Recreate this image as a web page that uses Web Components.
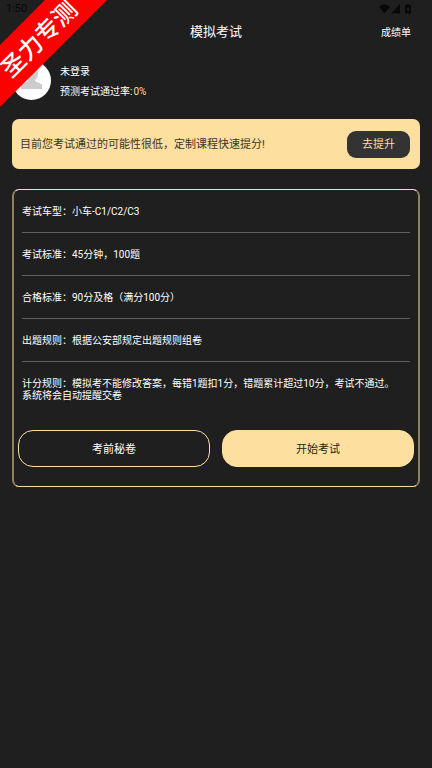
<!DOCTYPE html>
<html lang="zh-CN">
<head>
<meta charset="utf-8">
<meta name="viewport" content="width=device-width, initial-scale=1">
<title>模拟考试</title>
<style>
html{background:#1f1f1f}
body{margin:0;min-height:100vh;background:#1f1f1f;color:#fff;font:10px/12px Roboto,"Noto Sans CJK SC",sans-serif}
</style>
</head>
<body>
<exam-page></exam-page>
<script>
function define(name, html){
  customElements.define(name, class extends HTMLElement{
    constructor(){
      super();
      const t=document.createElement('template');
      t.innerHTML=html;
      this.attachShadow({mode:'open'}).append(t.content.cloneNode(true));
    }
  });
}

define('status-bar', `
<style>
:host{display:flex;justify-content:space-between;align-items:center;height:18px;padding:0 19px 0 6px;color:#080808;font-size:11px;line-height:18px}
svg{display:block}
</style>
<span>1:50</span>
<svg width="34" height="10" viewBox="0 0 34 10" fill="#080808" aria-hidden="true">
<path d="M0 2.8Q5.5-1.6 11 2.8L5.5 9.5Z"/>
<path d="M21 0V9.5H12Z"/>
<path fill-rule="evenodd" d="M28 0h2v1h2v8.5h-6V1h2ZM29.6 2.5 27.4 5.7H28.7V8L30.8 4.8H29.6Z"/>
</svg>`);

define('page-header', `
<style>
:host{display:grid;grid-template-columns:1fr auto 1fr;align-items:center;height:28px;padding:0 21px}
h1{grid-column:2;margin:0;font-size:13px;line-height:18px;font-weight:400}
a{justify-self:end;color:inherit;text-decoration:none;line-height:16px;padding-top:2px}
</style>
<h1><slot></slot></h1><a href="#report"><slot name="action"></slot></a>`);

define('user-summary', `
<style>
:host{display:flex;align-items:center;gap:9px;padding:14px 12px 0}
svg{display:block;flex:none}
div{display:grid;gap:4px;padding-top:4px}
p{margin:0;line-height:16px}
b{font-weight:400;color:#fddf9f;margin-left:1px}
</style>
<svg width="39" height="39" viewBox="0 0 39 39" aria-hidden="true"><circle cx="19.500" cy="19.500" r="19.500" fill="#fff"/><path fill="#ccc" d="M13 12c0-4 3-6 6.500-6S26 8 26 12c0 3-1 5-3 7v1c1 1 6 2 7 4v4H9v-4c1-2 6-3 7-4v-1c-2-2-3-4-3-7Z"/></svg>
<div><p><slot name="name"></slot></p><p><slot></slot><b><slot name="rate"></slot></b></p></div>`);

define('promo-banner', `
<style>
:host{display:flex;justify-content:space-between;align-items:center;margin:19px 12px 0;height:50px;padding:0 10px 0 8px;border-radius:7px;background:#fddf9f;color:#3a352a;font-size:11px}
span{padding-top:2px}
button{flex:none;width:63px;height:27px;border:0;border-radius:9px;padding:2px 0 0;background:#333;color:#fddf9f;font:inherit;line-height:16px}
</style>
<span><slot></slot></span><button type="button"><slot name="action"></slot></button>`);

define('info-row', `
<style>
:host{display:block;box-sizing:border-box;margin:0 8px;padding:16px 0 14px;border-bottom:1px solid #606060;line-height:12px}
:host([last]){border-bottom:0;padding-right:10px;padding-bottom:0}
</style>
<slot></slot>`);

define('pill-button', `
<style>
:host{display:block;flex:1}
button{display:block;width:100%;height:37px;box-sizing:border-box;padding:2px 0 0;border:1px solid #fddf9f;border-radius:15px;background:transparent;color:#fff;font:inherit;font-size:11px;line-height:16px}
:host([primary]) button{background:#fddf9f;color:#1f1f1f}
</style>
<button type="button"><slot></slot></button>`);

define('exam-card', `
<style>
:host{display:block;margin:20px 12px 0;padding-bottom:19px;border:1px solid #fddf9f;border-inline:2px solid #917f5d;border-radius:7px}
.actions{display:flex;gap:12px;margin:28px 4px 0}
</style>
<slot></slot><div class="actions"><slot name="actions"></slot></div>`);

define('corner-ribbon', `
<style>
:host{position:absolute;top:0;left:0;width:108px;height:108px;overflow:hidden;pointer-events:none}
span{position:absolute;top:38px;left:38px;box-sizing:border-box;width:180px;height:44px;padding:4px 0 0;transform:translate(-50%,-50%) rotate(-45deg);background:#f00;color:#fff;text-align:center;font-size:24px;line-height:40px;font-weight:500}
</style>
<span><slot></slot></span>`);

define('exam-page', `
<style>
:host{display:block;position:relative;min-height:100vh}
</style>
<status-bar></status-bar>
<page-header>模拟考试<span slot="action">成绩单</span></page-header>
<main>
<user-summary><span slot="name">未登录</span>预测考试通过率:<span slot="rate">0%</span></user-summary>
<promo-banner>目前您考试通过的可能性很低，定制课程快速提分!<span slot="action">去提升</span></promo-banner>
<exam-card>
<info-row>考试车型：小车-C1/C2/C3</info-row>
<info-row>考试标准：45分钟，100题</info-row>
<info-row>合格标准：90分及格（满分100分）</info-row>
<info-row>出题规则：根据公安部规定出题规则组卷</info-row>
<info-row last>计分规则：模拟考不能修改答案，每错1题扣1分，错题累计超过10分，考试不通过。系统将会自动提醒交卷</info-row>
<pill-button slot="actions">考前秘卷</pill-button>
<pill-button slot="actions" primary>开始考试</pill-button>
</exam-card>
</main>
<corner-ribbon>圣力专测</corner-ribbon>`);
</script>
</body>
</html>
